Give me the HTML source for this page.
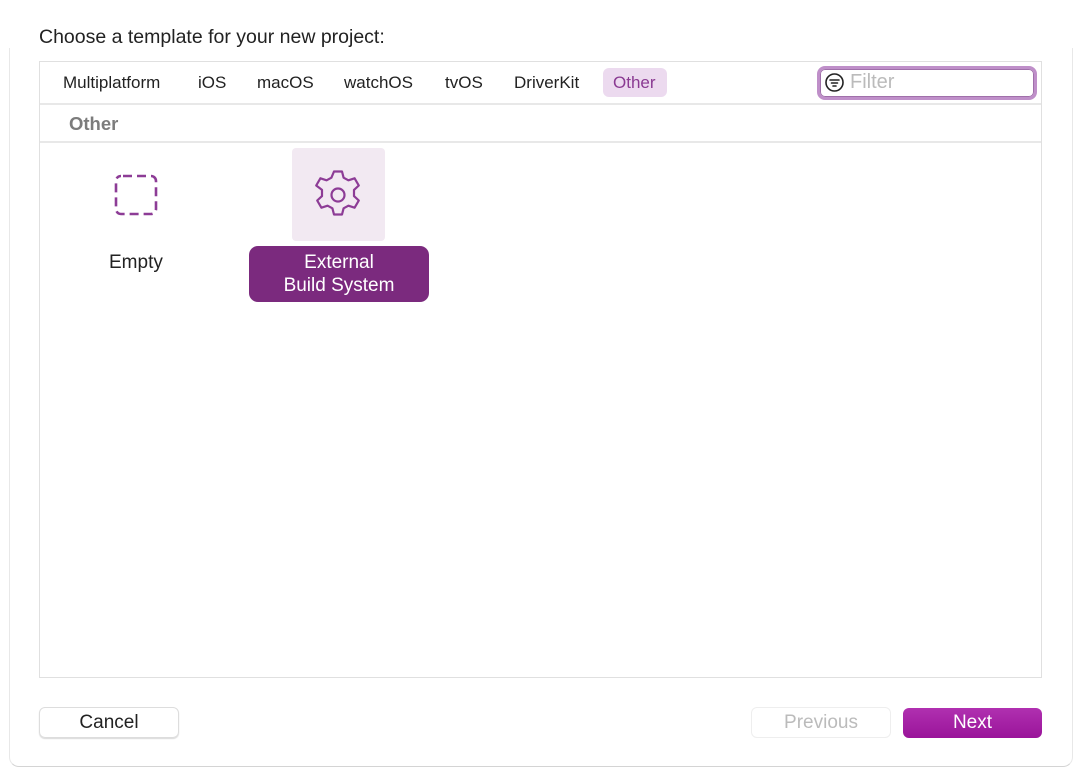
<!DOCTYPE html>
<html><head><style>
*{margin:0;padding:0;box-sizing:border-box}
body{width:1080px;height:778px;background:#fff;font-family:"Liberation Sans",sans-serif;position:relative;overflow:hidden;color:#222}
.a{position:absolute}
.tab{position:absolute;top:73px;font-size:17px;color:#222}
</style></head><body>
<div class="a" style="left:9px;top:48px;width:1064px;height:719px;border:1px solid #e8e8e8;border-top:none;border-radius:0 0 10px 10px;border-bottom-color:#d4d4d4"></div>
<div class="a" style="left:39px;top:26px;font-size:19.5px;color:#222">Choose a template for your new project:</div>
<div class="a" style="left:39px;top:61px;width:1003px;height:617px;border:1.5px solid #e0e0e0;background:#fff"></div>
<div class="a" style="left:40px;top:103px;width:1001px;height:2px;background:#e8e8e8"></div>
<div class="a" style="left:40px;top:141px;width:1001px;height:2px;background:#e8e8e8"></div>
<div class="tab" style="left:63px">Multiplatform</div>
<div class="tab" style="left:198px">iOS</div>
<div class="tab" style="left:257px">macOS</div>
<div class="tab" style="left:344px">watchOS</div>
<div class="tab" style="left:445px">tvOS</div>
<div class="tab" style="left:514px">DriverKit</div>
<div class="a" style="left:603px;top:68px;width:64px;height:29px;background:#ecdaef;border-radius:6px"></div>
<div class="tab" style="left:613px;color:#8a3a92">Other</div>
<div class="a" style="left:817px;top:66px;width:220px;height:34px;border:3px solid #bf8fc9;border-radius:8px;box-shadow:inset 0 0 0 1px #a070aa"></div>
<svg class="a" style="left:824px;top:72px" width="21" height="21" viewBox="0 0 21 21"><circle cx="10.5" cy="10.5" r="8.5" fill="none" stroke="#222" stroke-width="1.6"/><path d="M6 8h9M7.5 11h6M9 14h3" stroke="#222" stroke-width="1.6" stroke-linecap="round"/></svg>
<div class="a" style="left:850px;top:71px;font-size:20px;color:#bbb">Filter</div>
<div class="a" style="left:69px;top:113px;font-size:18.5px;font-weight:bold;color:#7c7c7c">Other</div>
<svg class="a" style="left:113px;top:173px" width="46" height="44" viewBox="0 0 46 44"><rect x="3" y="3" width="40" height="38" rx="5" fill="none" stroke="#8d3c96" stroke-width="2.6" stroke-dasharray="9 5" stroke-dashoffset="-2"/></svg>
<div class="a" style="left:109px;top:252px;font-size:19px">Empty</div>
<div class="a" style="left:292px;top:148px;width:93px;height:93px;background:#f2e9f2;border-radius:4px"></div>
<svg class="a" style="left:313px;top:170px" width="50" height="50" viewBox="0 0 50 50"><g fill="none" stroke="#8d3c96" stroke-width="2.2" stroke-linejoin="round"><path d="M21 1.5h8l1.6 6.2 4.8 2.6 6.2-2 4.2 7.2-4.8 4.4v6.2l4.8 4.4-4.2 7.2-6.2-2-4.8 2.6-1.6 6.2h-8l-1.6-6.2-4.8-2.6-6.2 2-4.2-7.2 4.8-4.4v-6.2L3.2 15.5l4.2-7.2 6.2 2 4.8-2.6z"/><circle cx="25" cy="25" r="6.5"/></g></svg>
<div class="a" style="left:249px;top:246px;width:180px;height:56px;background:#7b2a7e;border-radius:9px;color:#fff;font-size:19px;text-align:center;line-height:23px;padding-top:5px">External<br>Build System</div>
<div class="a" style="left:39px;top:707px;width:140px;height:31px;border:1px solid #ddd;border-radius:6px;box-shadow:0 1px 1px rgba(0,0,0,.15);text-align:center;font-size:19px;line-height:29px">Cancel</div>
<div class="a" style="left:751px;top:707px;width:140px;height:31px;border:1px solid #eee;border-radius:6px;text-align:center;font-size:19px;line-height:29px;color:#bbb">Previous</div>
<div class="a" style="left:903px;top:708px;width:139px;height:30px;background:linear-gradient(#b030b0,#9a149a);border-radius:6px;text-align:center;font-size:19px;line-height:29px;color:#fff">Next</div>
</body></html>
